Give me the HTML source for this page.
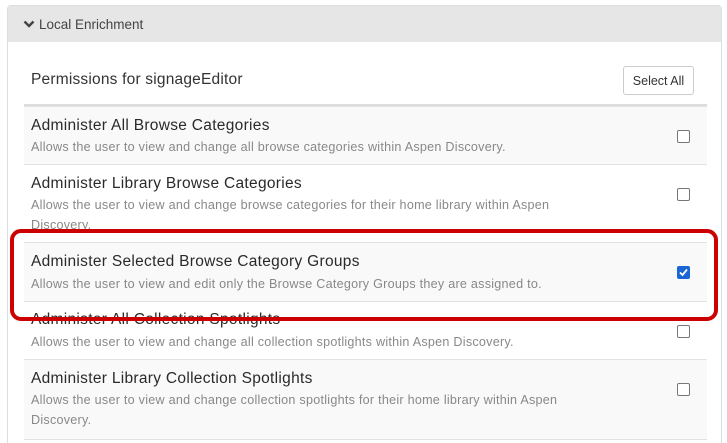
<!DOCTYPE html>
<html><head><style>
html,body{margin:0;width:727px;height:443px;overflow:hidden;background:#fff;font-family:"Liberation Sans",sans-serif;position:relative}
.panel{position:absolute;left:7px;top:5px;width:713px;height:445px;border:1px solid #ddd;border-radius:4px;background:#fff}
.hd{position:absolute;left:0;top:0;width:713px;height:36px;background:#e6e6e6}
.perm{position:absolute;left:31px;top:71px;font-size:15.5px;color:#333;letter-spacing:0.2px}
.btn{position:absolute;left:623px;top:66px;width:71px;height:29px;border:1px solid #ccc;border-radius:3px;font-size:12.5px;color:#333;text-align:center;line-height:29px;box-sizing:border-box}
.row{position:absolute;left:24px;width:683px;border-top:1px solid #e2e2e2;overflow:hidden}
.row.g{background:#f9f9f9}
.t{position:absolute;left:7px;font-size:15.5px;color:#2a2a2a;letter-spacing:0.3px;white-space:nowrap}
.d{position:absolute;left:7px;width:560px;font-size:12.6px;color:#888;line-height:20px;letter-spacing:0.25px}
.cb{position:absolute;left:653px;width:11px;height:11px;border:1.5px solid #777;border-radius:2px;background:#fff}
.cb.on{background:#1a66d6;border-color:#1a66d6}
.red{position:absolute;left:10px;top:229px;width:700px;height:84px;border:4px solid #cc0000;border-radius:11px}
</style></head><body>
<div class="panel"><div class="hd"></div></div>
<svg width="12" height="10" viewBox="0 0 12 10" style="position:absolute;left:23px;top:19px"><path d="M1.5 2.5L6 7L10.5 2.5" stroke="#444" stroke-width="2.4" fill="none"/></svg>
<div style="position:absolute;left:39px;top:15px;font-size:13.5px;color:#444;line-height:20px">Local Enrichment</div>
<div class="perm">Permissions for signageEditor</div>
<div class="btn">Select All</div>
<div style="position:absolute;left:24px;top:104px;width:683px;height:2px;background:#ddd"></div>
<div class="row g" style="top:106px;height:58px"><div class="t" style="top:10px">Administer All Browse Categories</div><div class="d" style="top:30px">Allows the user to view and change all browse categories within Aspen Discovery.</div><div class="cb" style="top:23px"></div></div>
<div class="row" style="top:164px;height:78px"><div class="t" style="top:10px">Administer Library Browse Categories</div><div class="d" style="top:30px">Allows the user to view and change browse categories for their home library within Aspen Discovery.</div><div class="cb" style="top:23px"></div></div>
<div class="row g" style="top:242px;height:59px"><div class="t" style="top:10px">Administer Selected Browse Category Groups</div><div class="d" style="top:31px">Allows the user to view and edit only the Browse Category Groups they are assigned to.</div><div class="cb on" style="top:23px"><svg width="11" height="11" viewBox="0 0 11 11" style="position:absolute;left:0;top:0"><path d="M2 5.5L4.5 8L9 2.5" stroke="#fff" stroke-width="1.8" fill="none"/></svg></div></div>
<div class="row" style="top:301px;height:58px"><div class="t" style="top:9px">Administer All Collection Spotlights</div><div class="d" style="top:30px">Allows the user to view and change all collection spotlights within Aspen Discovery.</div><div class="cb" style="top:23px"></div></div>
<div class="row g" style="top:359px;height:79px;border-bottom:1px solid #e2e2e2"><div class="t" style="top:10px">Administer Library Collection Spotlights</div><div class="d" style="top:30px">Allows the user to view and change collection spotlights for their home library within Aspen Discovery.</div><div class="cb" style="top:23px"></div></div>
<div class="red"></div>
</body></html>
